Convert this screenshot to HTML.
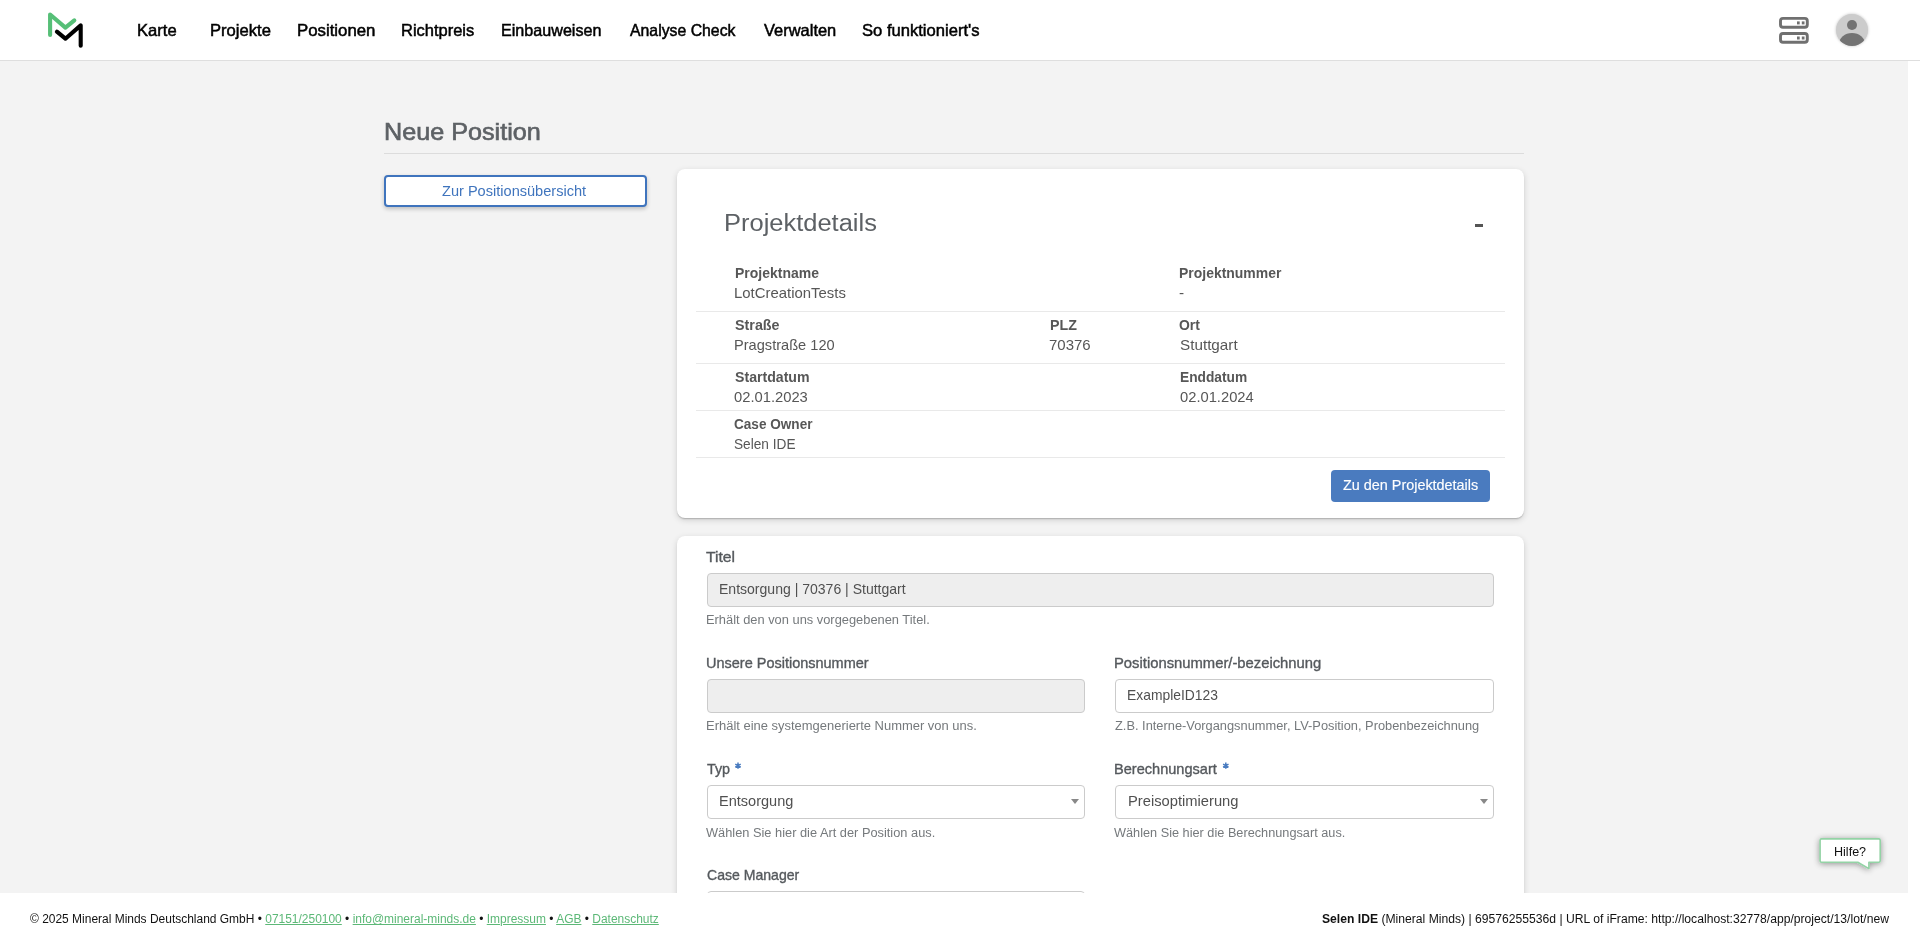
<!DOCTYPE html>
<html lang="de">
<head>
<meta charset="utf-8">
<title>Neue Position</title>
<style>
html,body{margin:0;padding:0;}
body{width:1920px;height:943px;overflow:hidden;position:relative;background:#fff;font-family:"Liberation Sans",sans-serif;}
.abs{position:absolute;box-sizing:border-box;}
.tx{position:absolute;white-space:nowrap;transform-origin:0 50%;}
#header{left:0;top:0;width:1920px;height:61px;background:#fff;border-bottom:1px solid #dedede;}
#content{left:0;top:61px;width:1908px;height:832px;background:#f3f3f3;overflow:hidden;}
#footer{left:0;top:893px;width:1920px;height:50px;background:#fff;}
.card{position:absolute;background:#fff;border-radius:8px;box-shadow:0 1px 1px rgba(0,0,0,.10),0 2px 2px -1px rgba(0,0,0,.12),0 2px 6px 0 rgba(0,0,0,.15);}
.sep{position:absolute;left:696px;width:809px;height:1px;background:#e9e9e9;}
.inp{position:absolute;box-sizing:border-box;border:1px solid #cbcbcb;border-radius:4px;background:#fff;}
.inp.dis{background:#eeeeee;}
.arrow{position:absolute;width:0;height:0;border-left:4px solid transparent;border-right:4px solid transparent;border-top:5px solid #888;}
</style>
</head>
<body>
<div class="abs" id="header">
  <svg style="position:absolute;left:0;top:0" width="100" height="60" viewBox="0 0 100 60">
    <polyline points="50.1,34.9 50.1,14.5 65.4,27.6 74.3,20.3" fill="none" stroke="#56bf77" stroke-width="4.1" stroke-linecap="round" stroke-linejoin="round"/>
    <polyline points="56.9,31.7 65.4,38.7 80.7,25.4 80.7,45.7" fill="none" stroke="#000" stroke-width="4.1" stroke-linecap="round" stroke-linejoin="round"/>
  </svg>
  <svg style="position:absolute;left:1770px;top:10px" width="50" height="40" viewBox="1770 10 50 40">
    <rect x="1780.5" y="18.4" width="26.8" height="8.8" rx="2.5" fill="none" stroke="#707070" stroke-width="2.9"/>
    <rect x="1780.5" y="33.5" width="26.8" height="8.8" rx="2.5" fill="none" stroke="#707070" stroke-width="2.9"/>
    <rect x="1797" y="21.4" width="2.7" height="3" fill="#707070"/>
    <rect x="1801.8" y="21.4" width="2.7" height="3" fill="#707070"/>
    <rect x="1797" y="36.5" width="2.7" height="3" fill="#707070"/>
    <rect x="1801.8" y="36.5" width="2.7" height="3" fill="#707070"/>
  </svg>
  <div class="abs" style="left:1835.5px;top:13.7px;width:32.5px;height:32.5px;border-radius:50%;background:#cccccc;box-shadow:0 0 3px rgba(0,0,0,.25);overflow:hidden;">
    <div class="abs" style="left:11.4px;top:6.3px;width:9.8px;height:9.8px;border-radius:50%;background:#737373;"></div>
    <div class="abs" style="left:3.2px;top:19.2px;width:26.5px;height:22px;border-radius:50%;background:#737373;"></div>
  </div>
</div>
<div class="abs" id="content">
  <div class="abs" style="left:384px;top:92px;width:1140px;height:1px;background:#dcdcdc;"></div>
  <div class="abs" style="left:384px;top:114px;width:263px;height:32px;border:2px solid #3f74bd;border-radius:4px;background:#fff;box-shadow:0 2px 4px rgba(0,0,0,.22);"></div>
  <div class="card" style="left:677px;top:108px;width:847px;height:349px;"></div>
  <div class="card" style="left:677px;top:475px;width:847px;height:600px;"></div>
</div>
<div class="abs" id="footer"></div>
<!-- card 1 details (absolute page coords) -->
<div class="abs" style="left:1475px;top:224px;width:8.3px;height:3px;background:#555;"></div>
<div class="sep" style="top:311px"></div>
<div class="sep" style="top:363px"></div>
<div class="sep" style="top:410px"></div>
<div class="sep" style="top:457px"></div>
<div class="abs" style="left:1331px;top:470px;width:159px;height:32px;border-radius:4px;background:#4a7bbf;"></div>
<!-- form inputs -->
<div class="inp dis" style="left:707px;top:573px;width:787px;height:34px;"></div>
<div class="inp dis" style="left:707px;top:679px;width:378px;height:34px;"></div>
<div class="inp" style="left:1115px;top:679px;width:379px;height:34px;"></div>
<div class="inp" style="left:707px;top:785px;width:378px;height:34px;"></div>
<div class="arrow" style="left:1071px;top:799px;"></div>
<div class="inp" style="left:1115px;top:785px;width:379px;height:34px;"></div>
<div class="arrow" style="left:1480px;top:799px;"></div>
<div style="position:absolute;left:0;top:0;width:1920px;height:893px;overflow:hidden;pointer-events:none">
  <div class="inp" style="left:707px;top:891px;width:378px;height:34px;"></div>
</div>
<div class="abs" style="left:691px;top:800px;width:1px;height:1px;"></div>
<!-- hilfe bubble -->
<svg style="position:absolute;left:1800px;top:825px;overflow:visible" width="100" height="60" viewBox="1800 825 100 60">
  <defs><filter id="sh" x="-50%" y="-50%" width="200%" height="200%"><feGaussianBlur in="SourceAlpha" stdDeviation="3"/><feOffset dx="0" dy="0.5"/><feComponentTransfer><feFuncA type="linear" slope="0.4"/></feComponentTransfer><feMerge><feMergeNode/><feMergeNode in="SourceGraphic"/></feMerge></filter></defs>
  <path filter="url(#sh)" d="M1821.5,838.9 H1878.8 Q1880.2,838.9 1880.2,840.3 V860.8 Q1880.2,862.2 1878.8,862.2 H1868.9 V868.6 L1857.8,862.2 H1821.5 Q1820.1,862.2 1820.1,860.8 V840.3 Q1820.1,838.9 1821.5,838.9 Z" fill="#fff" stroke="#93d3a5" stroke-width="1.6" stroke-linejoin="round"/>
</svg>
<svg style="position:absolute;left:0;top:0;overflow:visible" width="1" height="1">
  <g stroke="#4a7cc0" stroke-width="1.5" stroke-linecap="butt">
    <path d="M738,762.6 V768.8 M735.3,764.15 L740.7,767.25 M735.3,767.25 L740.7,764.15"/>
    <path d="M1225.8,762.6 V768.8 M1223.1,764.15 L1228.5,767.25 M1223.1,767.25 L1228.5,764.15"/>
  </g>
</svg>
<div class="tx" id="nav1" style="left:136.93px;top:22.03px;font-size:16.5px;line-height:16.5px;color:#000;font-weight:400;-webkit-text-stroke:0.5px currentColor;transform:scaleX(1.0054)">Karte</div>
<div class="tx" id="nav2" style="left:209.95px;top:22.03px;font-size:16.5px;line-height:16.5px;color:#000;font-weight:400;-webkit-text-stroke:0.5px currentColor;transform:scaleX(1.0058)">Projekte</div>
<div class="tx" id="nav3" style="left:296.99px;top:22.03px;font-size:16.5px;line-height:16.5px;color:#000;font-weight:400;-webkit-text-stroke:0.5px currentColor;transform:scaleX(1.0183)">Positionen</div>
<div class="tx" id="nav4" style="left:401.35px;top:22.03px;font-size:16.5px;line-height:16.5px;color:#000;font-weight:400;-webkit-text-stroke:0.5px currentColor;transform:scaleX(0.9987)">Richtpreis</div>
<div class="tx" id="nav5" style="left:501.43px;top:22.03px;font-size:16.5px;line-height:16.5px;color:#000;font-weight:400;-webkit-text-stroke:0.5px currentColor;transform:scaleX(0.9779)">Einbauweisen</div>
<div class="tx" id="nav6" style="left:630.01px;top:22.03px;font-size:16.5px;line-height:16.5px;color:#000;font-weight:400;-webkit-text-stroke:0.5px currentColor;transform:scaleX(0.9582)">Analyse Check</div>
<div class="tx" id="nav7" style="left:763.52px;top:22.03px;font-size:16.5px;line-height:16.5px;color:#000;font-weight:400;-webkit-text-stroke:0.5px currentColor;transform:scaleX(0.9972)">Verwalten</div>
<div class="tx" id="nav8" style="left:862.36px;top:22.03px;font-size:16.5px;line-height:16.5px;color:#000;font-weight:400;-webkit-text-stroke:0.5px currentColor;transform:scaleX(1.0054)">So funktioniert's</div>
<div class="tx" id="title" style="left:383.63px;top:120.08px;font-size:24px;line-height:24px;color:#5d6165;font-weight:400;-webkit-text-stroke:0.65px currentColor;transform:scaleX(1.0490)">Neue Position</div>
<div class="tx" id="btn1" style="left:442.39px;top:182.70px;font-size:15px;line-height:15px;color:#3f74bd;font-weight:400;transform:scaleX(0.9713)">Zur Positionsübersicht</div>
<div class="tx" id="pd" style="left:723.60px;top:212.01px;font-size:23.5px;line-height:23.5px;color:#5d6165;font-weight:400;transform:scaleX(1.0840)">Projektdetails</div>
<div class="tx" id="l1" style="left:734.51px;top:265.63px;font-size:14.5px;line-height:14.5px;color:#575757;font-weight:700;transform:scaleX(0.9642)">Projektname</div>
<div class="tx" id="v1" style="left:733.89px;top:285.63px;font-size:14.5px;line-height:14.5px;color:#575757;font-weight:400;transform:scaleX(1.0285)">LotCreationTests</div>
<div class="tx" id="l2" style="left:1179.41px;top:265.83px;font-size:14.5px;line-height:14.5px;color:#575757;font-weight:700;transform:scaleX(0.9624)">Projektnummer</div>
<div class="tx" id="v2" style="left:1179.03px;top:285.63px;font-size:14.5px;line-height:14.5px;color:#575757;font-weight:400;transform:scaleX(1.0616)">-</div>
<div class="tx" id="l3" style="left:734.58px;top:317.73px;font-size:14.5px;line-height:14.5px;color:#575757;font-weight:700;transform:scaleX(0.9868)">Straße</div>
<div class="tx" id="v3" style="left:734.04px;top:337.73px;font-size:14.5px;line-height:14.5px;color:#575757;font-weight:400;transform:scaleX(1.0070)">Pragstraße 120</div>
<div class="tx" id="l4" style="left:1049.52px;top:317.73px;font-size:14.5px;line-height:14.5px;color:#575757;font-weight:700;transform:scaleX(0.9824)">PLZ</div>
<div class="tx" id="v4" style="left:1049.18px;top:337.73px;font-size:14.5px;line-height:14.5px;color:#575757;font-weight:400;transform:scaleX(1.0339)">70376</div>
<div class="tx" id="l5" style="left:1179.47px;top:317.73px;font-size:14.5px;line-height:14.5px;color:#575757;font-weight:700;transform:scaleX(0.9588)">Ort</div>
<div class="tx" id="v5" style="left:1179.79px;top:337.73px;font-size:14.5px;line-height:14.5px;color:#575757;font-weight:400;transform:scaleX(1.0518)">Stuttgart</div>
<div class="tx" id="l6" style="left:734.62px;top:369.93px;font-size:14.5px;line-height:14.5px;color:#575757;font-weight:700;transform:scaleX(0.9742)">Startdatum</div>
<div class="tx" id="v6" style="left:734.08px;top:389.73px;font-size:14.5px;line-height:14.5px;color:#575757;font-weight:400;transform:scaleX(1.0173)">02.01.2023</div>
<div class="tx" id="l7" style="left:1179.55px;top:369.93px;font-size:14.5px;line-height:14.5px;color:#575757;font-weight:700;transform:scaleX(0.9473)">Enddatum</div>
<div class="tx" id="v7" style="left:1179.73px;top:389.73px;font-size:14.5px;line-height:14.5px;color:#575757;font-weight:400;transform:scaleX(1.0158)">02.01.2024</div>
<div class="tx" id="l8" style="left:734.16px;top:417.03px;font-size:14.5px;line-height:14.5px;color:#575757;font-weight:700;transform:scaleX(0.9361)">Case Owner</div>
<div class="tx" id="v8" style="left:734.17px;top:436.53px;font-size:14.5px;line-height:14.5px;color:#575757;font-weight:400;transform:scaleX(0.9424)">Selen IDE</div>
<div class="tx" id="btn2" style="left:1342.89px;top:476.70px;font-size:15px;line-height:15px;color:#ffffff;font-weight:400;-webkit-text-stroke:0.15px #fff;transform:scaleX(0.9595)">Zu den Projektdetails</div>
<div class="tx" id="f1" style="left:706.37px;top:549.83px;font-size:14.5px;line-height:14.5px;color:#55595d;font-weight:400;-webkit-text-stroke:0.35px currentColor;transform:scaleX(1.0819)">Titel</div>
<div class="tx" id="i1" style="left:718.65px;top:580.70px;font-size:15px;line-height:15px;color:#505050;font-weight:400;transform:scaleX(0.9352)">Entsorgung | 70376 | Stuttgart</div>
<div class="tx" id="h1" style="left:705.80px;top:614.02px;font-size:12.5px;line-height:12.5px;color:#75797c;font-weight:400;transform:scaleX(1.0286)">Erhält den von uns vorgegebenen Titel.</div>
<div class="tx" id="f2" style="left:705.66px;top:655.93px;font-size:14.5px;line-height:14.5px;color:#55595d;font-weight:400;-webkit-text-stroke:0.35px currentColor;transform:scaleX(0.9990)">Unsere Positionsnummer</div>
<div class="tx" id="h2" style="left:705.77px;top:720.42px;font-size:12.5px;line-height:12.5px;color:#75797c;font-weight:400;transform:scaleX(1.0369)">Erhält eine systemgenerierte Nummer von uns.</div>
<div class="tx" id="f3" style="left:1113.91px;top:655.93px;font-size:14.5px;line-height:14.5px;color:#55595d;font-weight:400;-webkit-text-stroke:0.35px currentColor;transform:scaleX(1.0205)">Positionsnummer/-bezeichnung</div>
<div class="tx" id="i3" style="left:1127.13px;top:687.30px;font-size:15px;line-height:15px;color:#505050;font-weight:400;transform:scaleX(0.9239)">ExampleID123</div>
<div class="tx" id="h3" style="left:1114.81px;top:720.42px;font-size:12.5px;line-height:12.5px;color:#75797c;font-weight:400;transform:scaleX(1.0265)">Z.B. Interne-Vorgangsnummer, LV-Position, Probenbezeichnung</div>
<div class="tx" id="f4" style="left:706.98px;top:762.13px;font-size:14.5px;line-height:14.5px;color:#55595d;font-weight:400;-webkit-text-stroke:0.35px currentColor;transform:scaleX(0.9864)">Typ</div>
<div class="tx" id="i4" style="left:718.53px;top:793.10px;font-size:15px;line-height:15px;color:#505050;font-weight:400;transform:scaleX(0.9693)">Entsorgung</div>
<div class="tx" id="h4" style="left:706.45px;top:826.82px;font-size:12.5px;line-height:12.5px;color:#75797c;font-weight:400;transform:scaleX(1.0245)">Wählen Sie hier die Art der Position aus.</div>
<div class="tx" id="f5" style="left:706.61px;top:867.93px;font-size:14.5px;line-height:14.5px;color:#55595d;font-weight:400;-webkit-text-stroke:0.35px currentColor;transform:scaleX(0.9697)">Case Manager</div>
<div class="tx" id="f6" style="left:1114.19px;top:762.13px;font-size:14.5px;line-height:14.5px;color:#55595d;font-weight:400;-webkit-text-stroke:0.35px currentColor;transform:scaleX(1.0046)">Berechnungsart</div>
<div class="tx" id="i6" style="left:1127.67px;top:793.10px;font-size:15px;line-height:15px;color:#505050;font-weight:400;transform:scaleX(0.9817)">Preisoptimierung</div>
<div class="tx" id="h6" style="left:1114.45px;top:826.82px;font-size:12.5px;line-height:12.5px;color:#75797c;font-weight:400;transform:scaleX(1.0180)">Wählen Sie hier die Berechnungsart aus.</div>
<div class="tx" id="foot1" style="left:30.06px;top:913.32px;font-size:12.5px;line-height:12.5px;color:#111;font-weight:400;transform:scaleX(0.9576)">© 2025 Mineral Minds Deutschland GmbH • <u style="color:#5cb877">07151/250100</u> • <u style="color:#5cb877">info@mineral-minds.de</u> • <u style="color:#5cb877">Impressum</u> • <u style="color:#5cb877">AGB</u> • <u style="color:#5cb877">Datenschutz</u></div>
<div class="tx" id="foot2" style="left:1322.40px;top:913.32px;font-size:12.5px;line-height:12.5px;color:#111;font-weight:400;transform:scaleX(0.9718)"><b>Selen IDE</b> (Mineral Minds) | 69576255536d | URL of iFrame: http://localhost:32778/app/project/13/lot/new</div>
<div class="tx" id="hilfe" style="left:1833.51px;top:844.60px;font-size:13px;line-height:13px;color:#111;font-weight:400;transform:scaleX(0.9656)">Hilfe?</div>
</body>
</html>
